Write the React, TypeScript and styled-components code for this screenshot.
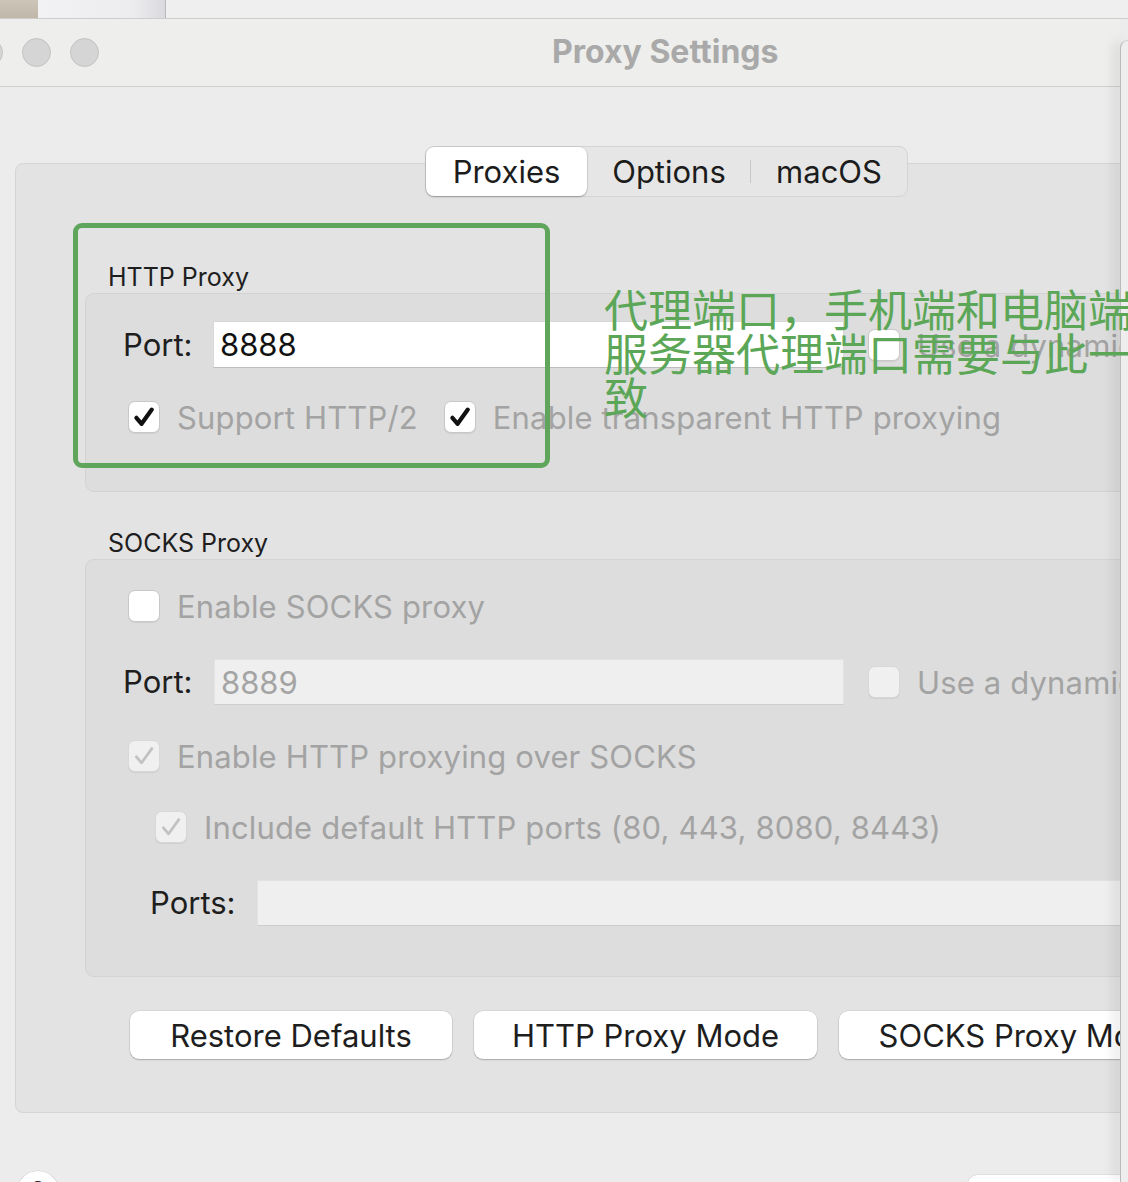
import React from 'react';
import styled, { createGlobalStyle } from 'styled-components';

const GlobalStyle = createGlobalStyle`
  html, body { margin: 0; padding: 0; background: #ececec; overflow: hidden; }
  body { font-family: Inter, "Liberation Sans", "Noto Sans", sans-serif; color: #1e1e1e; }
  * { box-sizing: border-box; }
`;

const Page = styled.div`
  position: relative;
  width: 1128px;
  height: 1182px;
  overflow: hidden;
  display: flex;
  flex-direction: column;
  background: #ececec;
`;

const TopStrip = styled.div`
  height: 19px;
  flex: none;
  display: flex;
  background: #efefef;
  border-bottom: 1px solid #cdcdcd;
`;

const StripTan = styled.div`
  width: 38px;
  background: linear-gradient(180deg, #cdc5b9, #c0b7a9);
`;

const StripTab = styled.div`
  width: 128px;
  background: linear-gradient(90deg, #f2f2f4 0%, #ececef 75%, #dadade 100%);
  border-right: 1px solid #b8b8bc;
`;

const Body = styled.div`
  flex: 1;
  min-height: 0;
  display: flex;
`;

const Window = styled.div`
  flex: 0 0 1120px;
  overflow: hidden;
  display: flex;
  flex-direction: column;
  background: #ececec;
`;

const SideEdge = styled.div`
  position: relative;
  z-index: 1;
  flex: 1;
  margin-top: 21px;
  background: #eeeeee;
  border-left: 1px solid #b9b9b9;
  border-top: 1px solid #d2d2d2;
  border-top-left-radius: 10px;
  box-shadow: -6px 0 12px rgba(0, 0, 0, 0.1);
`;

const TitleBar = styled.div`
  height: 68px;
  flex: none;
  display: flex;
  align-items: center;
  background: #eeeeec;
  border-bottom: 1px solid #d0d0d0;
`;

const Lights = styled.div`
  display: flex;
  gap: 19px;
  margin-left: -26px;
`;

const Light = styled.span`
  width: 29px;
  height: 29px;
  border-radius: 50%;
  background: #d5d5d5;
  border: 1px solid #c3c3c3;
`;

const Title = styled.div`
  margin-left: 453px;
  margin-top: -2px;
  font-size: 32px;
  font-weight: 700;
  color: #a9a9a9;
`;

const Content = styled.div`
  flex: 1;
  display: flex;
  flex-direction: column;
  padding: 59px 0 0 15px;
`;

const Segmented = styled.div`
  position: relative;
  z-index: 1;
  align-self: flex-start;
  margin-left: 410px;
  margin-bottom: -34px;
  height: 51px;
  display: flex;
  align-items: stretch;
  background: #e6e6e6;
  border: 1px solid #d4d4d4;
  border-radius: 9px;
`;

const Segment = styled.div<{ $w: number; $active?: boolean; $divider?: boolean }>`
  width: ${(p) => p.$w}px;
  display: flex;
  align-items: center;
  justify-content: center;
  font-size: 31px;
  color: #1c1c1c;
  border-radius: 8px;
  background: ${(p) => (p.$active ? '#ffffff' : 'transparent')};
  box-shadow: ${(p) => (p.$active ? '0 1px 2px rgba(0,0,0,0.28), 0 0 0 0.5px rgba(0,0,0,0.08)' : 'none')};
  position: relative;
  &::before {
    content: '';
    display: ${(p) => (p.$divider ? 'block' : 'none')};
    position: absolute;
    left: -1px;
    top: 13px;
    bottom: 13px;
    width: 1px;
    background: #c8c8c8;
  }
`;

const TabBox = styled.div`
  width: 1140px;
  height: 950px;
  flex: none;
  background: #e3e3e3;
  border: 1px solid #d5d5d5;
  border-radius: 8px;
  padding: 98px 0 0 69px;
  display: flex;
  flex-direction: column;
  align-items: flex-start;
`;

const SectionLabel = styled.div<{ $top?: number }>`
  margin-left: 23px;
  margin-top: ${(p) => p.$top ?? 0}px;
  margin-bottom: 1px;
  font-size: 25px;
  line-height: 30px;
  color: #1e1e1e;
`;

const Group = styled.div<{ $h: number; $pt: number }>`
  align-self: stretch;
  height: ${(p) => p.$h}px;
  padding-top: ${(p) => p.$pt}px;
  background: #dddddd;
  border: 1px solid #d3d3d3;
  border-radius: 9px;
  display: flex;
  flex-direction: column;
`;

const Row = styled.div<{ $indent: number; $top?: number; $h?: number; $gap?: number }>`
  display: flex;
  align-items: center;
  margin-left: ${(p) => p.$indent}px;
  margin-top: ${(p) => p.$top ?? 0}px;
  height: ${(p) => (p.$h ? `${p.$h}px` : '32px')};
  gap: ${(p) => p.$gap ?? 0}px;
  white-space: nowrap;
`;

const FieldLabel = styled.div<{ $w: number }>`
  width: ${(p) => p.$w}px;
  flex: none;
  font-size: 31px;
  line-height: 36px;
  color: #1e1e1e;
`;

const Input = styled.div<{ $w?: number; $disabled?: boolean }>`
  ${(p) => (p.$w ? `width: ${p.$w}px; flex: none;` : 'flex: 1;')}
  align-self: stretch;
  display: flex;
  align-items: center;
  padding-left: 6px;
  font-size: 31px;
  color: ${(p) => (p.$disabled ? '#a4a4a4' : '#111111')};
  background: ${(p) => (p.$disabled ? '#efefef' : '#ffffff')};
  border: 1px solid ${(p) => (p.$disabled ? '#e2e2e2' : '#d8d8d8')};
  border-bottom-color: ${(p) => (p.$disabled ? '#cdcdcd' : '#bdbdbd')};
`;

const CheckItem = styled.label<{ $ml?: number }>`
  display: flex;
  align-items: center;
  gap: 17px;
  height: 32px;
  margin-left: ${(p) => p.$ml ?? 0}px;
  flex: none;
`;

const Box = styled.span<{ $disabled?: boolean }>`
  width: 32px;
  height: 32px;
  flex: none;
  border-radius: 7px;
  background: ${(p) => (p.$disabled ? '#f0f0f0' : '#ffffff')};
  border: 1px solid ${(p) => (p.$disabled ? '#d8d8d8' : '#c8c8c8')};
  box-shadow: 0 1px 1px rgba(0, 0, 0, 0.07);
  display: flex;
  align-items: center;
  justify-content: center;
`;

const CheckText = styled.span`
  font-size: 31px;
  line-height: 32px;
  color: #a3a3a3;
  letter-spacing: 0.15px;
  padding-top: 2px;
`;

const ButtonRow = styled.div`
  display: flex;
  gap: 22px;
  margin: 34px 0 0 45px;
`;

const PushButton = styled.div<{ $w: number }>`
  width: ${(p) => p.$w}px;
  height: 48px;
  flex: none;
  display: flex;
  align-items: center;
  justify-content: center;
  white-space: nowrap;
  overflow: hidden;
  font-size: 31px;
  color: #1e1e1e;
  background: #ffffff;
  border-radius: 9px;
  box-shadow: 0 1px 1.5px rgba(0, 0, 0, 0.22), 0 0 0 0.5px rgba(0, 0, 0, 0.1);
`;

const Footer = styled.div`
  display: flex;
  justify-content: space-between;
  align-items: flex-start;
  margin: 58px 0 0 2px;
`;

const HelpButton = styled.div`
  width: 42px;
  height: 42px;
  border-radius: 50%;
  background: #ffffff;
  box-shadow: 0 1px 1.5px rgba(0, 0, 0, 0.22), 0 0 0 0.5px rgba(0, 0, 0, 0.12);
  display: flex;
  justify-content: center;
  padding-top: 4px;
  font-size: 26px;
  color: #333;
`;

const CornerButton = styled.div`
  width: 200px;
  height: 48px;
  margin-top: 4px;
  margin-right: -48px;
  background: #ffffff;
  border-radius: 9px;
  box-shadow: 0 1px 1.5px rgba(0, 0, 0, 0.22), 0 0 0 0.5px rgba(0, 0, 0, 0.1);
`;

const GreenFrame = styled.div`
  position: absolute;
  z-index: 2;
  left: 73px;
  top: 223px;
  width: 477px;
  height: 245px;
  border: 5px solid #5fa55b;
  border-radius: 9px;
`;

const Note = styled.div`
  position: absolute;
  z-index: 2;
  left: 604px;
  top: 286px;
  width: 540px;
  font-family: "Noto Sans CJK SC", "Noto Sans", sans-serif;
  font-size: 44px;
  line-height: 44px;
  color: #5ba757;
`;

const Check: React.FC<{ checked?: boolean; disabled?: boolean }> = ({ checked, disabled }) => (
  <Box $disabled={disabled}>
    {checked && (
      <svg width="24" height="24" viewBox="0 0 24 24">
        <path
          d="M4.4 12.8 L9.6 18.8 L19.8 4.6"
          fill="none"
          stroke={disabled ? '#c2c2c2' : '#111111'}
          strokeWidth={disabled ? 2.8 : 4.2}
          strokeLinecap="round"
          strokeLinejoin="round"
        />
      </svg>
    )}
  </Box>
);

export default function App() {
  return (
    <Page>
      <GlobalStyle />
      <TopStrip>
        <StripTan />
        <StripTab />
      </TopStrip>
      <Body>
        <Window>
          <TitleBar>
            <Lights>
              <Light />
              <Light />
              <Light />
            </Lights>
            <Title>Proxy Settings</Title>
          </TitleBar>
          <Content>
            <Segmented>
              <Segment $w={161} $active>Proxies</Segment>
              <Segment $w={164}>Options</Segment>
              <Segment $w={156} $divider>macOS</Segment>
            </Segmented>
            <TabBox>
              <SectionLabel>HTTP Proxy</SectionLabel>
              <Group $h={199} $pt={27}>
                <Row $indent={37} $h={47}>
                  <FieldLabel $w={90}>Port:</FieldLabel>
                  <Input $w={631}>8888</Input>
                  <CheckItem $ml={24}>
                    <Check />
                    <CheckText>Use a dynamic port</CheckText>
                  </CheckItem>
                </Row>
                <Row $indent={42} $top={33} $gap={26}>
                  <CheckItem>
                    <Check checked />
                    <CheckText>Support HTTP/2</CheckText>
                  </CheckItem>
                  <CheckItem>
                    <Check checked />
                    <CheckText>Enable transparent HTTP proxying</CheckText>
                  </CheckItem>
                </Row>
              </Group>
              <SectionLabel $top={36}>SOCKS Proxy</SectionLabel>
              <Group $h={418} $pt={30}>
                <Row $indent={42}>
                  <CheckItem>
                    <Check />
                    <CheckText>Enable SOCKS proxy</CheckText>
                  </CheckItem>
                </Row>
                <Row $indent={37} $top={37} $h={46}>
                  <FieldLabel $w={91}>Port:</FieldLabel>
                  <Input $w={630} $disabled>8889</Input>
                  <CheckItem $ml={24}>
                    <Check disabled />
                    <CheckText>Use a dynamic port</CheckText>
                  </CheckItem>
                </Row>
                <Row $indent={42} $top={35}>
                  <CheckItem>
                    <Check checked disabled />
                    <CheckText>Enable HTTP proxying over SOCKS</CheckText>
                  </CheckItem>
                </Row>
                <Row $indent={69} $top={39}>
                  <CheckItem>
                    <Check checked disabled />
                    <CheckText>Include default HTTP ports (80, 443, 8080, 8443)</CheckText>
                  </CheckItem>
                </Row>
                <Row $indent={64} $top={37} $h={46}>
                  <FieldLabel $w={107}>Ports:</FieldLabel>
                  <Input $disabled />
                </Row>
              </Group>
              <ButtonRow>
                <PushButton $w={322}>Restore Defaults</PushButton>
                <PushButton $w={343}>HTTP Proxy Mode</PushButton>
                <PushButton $w={370}>SOCKS Proxy Mode</PushButton>
              </ButtonRow>
            </TabBox>
            <Footer>
              <HelpButton>?</HelpButton>
              <CornerButton />
            </Footer>
          </Content>
        </Window>
        <SideEdge />
      </Body>
      <GreenFrame />
      <Note>代理端口，手机端和电脑端服务器代理端口需要与此一致</Note>
    </Page>
  );
}
